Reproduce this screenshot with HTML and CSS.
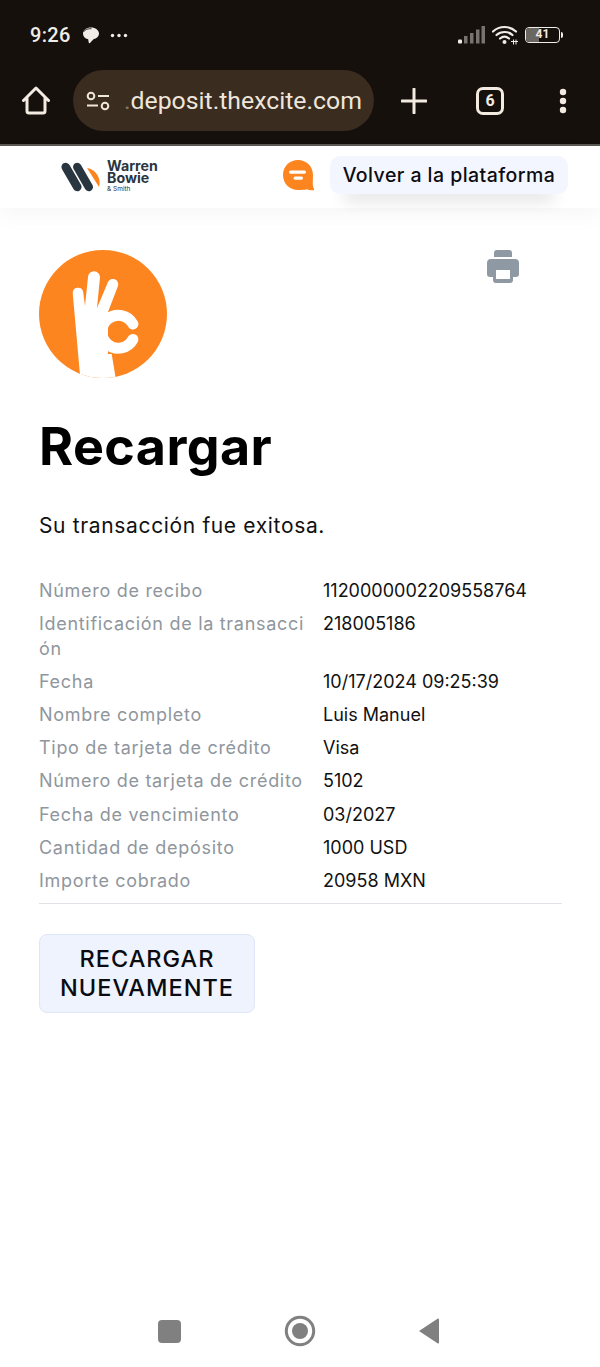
FILE: index.html
```html
<!DOCTYPE html>
<html lang="es">

<head>
  <meta charset="UTF-8">
  <meta name="viewport" content="width=device-width, initial-scale=1.0">
  <title>Recargar</title>
  <link rel="stylesheet" href="styles.css">
</head>

<body>
  <div class="phone">
    <!-- status bar + browser toolbar -->
    <div class="chrome">
      <div class="status-bar">
        <span class="clock">9:26</span>
        <svg class="ic-bubble" width="17" height="17" viewBox="0 0 17 17">
          <path d="M9 .5c4.500 0 8 2.700 8 6 0 2.800-2.300 5-5.500 5.700L8 16c-.6.500-1.200.3-1.300-.4l-.5-3.400C2.800 11.600 1 9.500 1 6.500 1 3.200 4.500 .5 9 .5z" fill="#f0ece6" />
          <path d="M1.500 5C3 2.500 6 1.500 9.500 1.700" stroke="#15100c" stroke-width=".8" fill="none" />
        </svg>
        <svg class="ic-dots" width="18" height="5" viewBox="0 0 18 5">
          <circle cx="2.500" cy="2.500" r="1.700" fill="#f0ece6" />
          <circle cx="9" cy="2.500" r="1.700" fill="#f0ece6" />
          <circle cx="15.500" cy="2.500" r="1.700" fill="#f0ece6" />
        </svg>
        <div class="status-right">
          <svg width="27" height="18" viewBox="0 0 27 18">
            <rect x="0" y="13.500" width="4" height="4" rx="1" fill="#f0ece6" />
            <rect x="6" y="10" width="3.500" height="7.500" fill="#77736e" />
            <rect x="12" y="7" width="3.500" height="10.500" fill="#77736e" />
            <rect x="18" y="3.500" width="3.500" height="14" fill="#77736e" />
            <rect x="23.500" y="0" width="3.500" height="17.500" fill="#77736e" />
          </svg>
          <svg class="ic-wifi" width="26" height="20" viewBox="0 0 26 20">
            <path d="M1 6.500C7.500 .5 17.500 .5 24 6.500M4.500 10C9 6 16 6 20.500 10M8 13.500C10.800 11.200 14.200 11.200 17 13.500" fill="none" stroke="#f0ece6" stroke-width="2.200" stroke-linecap="round" />
            <circle cx="12.500" cy="17" r="2" fill="#f0ece6" />
            <path d="M19 16.500h7M21.500 14.500v5M24 14.500v5" stroke="#f0ece6" stroke-width="1" fill="none" />
          </svg>
          <div class="battery">
            <div class="battery-body"><span class="battery-level"></span><span class="battery-num">41</span></div>
            <span class="battery-tip"></span>
          </div>
        </div>
      </div>
      <div class="toolbar">
        <svg class="ic-home" width="28" height="29" viewBox="0 0 28 29">
          <path d="M1.500 14.500L14 2l12.500 12.500M5 12v13a2 2 0 0 0 2 2h14a2 2 0 0 0 2-2V12" fill="none" stroke="#f3ebe2" stroke-width="3" stroke-linecap="round" stroke-linejoin="round" />
        </svg>
        <div class="url-pill">
          <svg width="24" height="20" viewBox="0 0 24 20">
            <circle cx="5" cy="5" r="3.300" fill="none" stroke="#efe6db" stroke-width="2" />
            <path d="M12 5h11M1 14.500h11" stroke="#efe6db" stroke-width="2.200" fill="none" />
            <circle cx="19" cy="15" r="3.300" fill="none" stroke="#efe6db" stroke-width="2" />
          </svg>
          <span class="url"><span class="url-fade">.</span>deposit.thexcite.com</span>
        </div>
        <svg class="ic-plus" width="26" height="26" viewBox="0 0 26 26">
          <path d="M13 1v24M1 13h24" stroke="#f3ebe2" stroke-width="3" fill="none" stroke-linecap="round" />
        </svg>
        <div class="tab-count">6</div>
        <svg class="ic-menu" width="8" height="26" viewBox="0 0 8 26">
          <circle cx="4" cy="4" r="3.200" fill="#f3ebe2" />
          <circle cx="4" cy="13" r="3.200" fill="#f3ebe2" />
          <circle cx="4" cy="22" r="3.200" fill="#f3ebe2" />
        </svg>
      </div>
    </div>

    <!-- site header -->
    <div class="site-header">
      <div class="brand">
        <svg width="43" height="31" viewBox="0 0 43 31">
          <path d="M27 7a15 15 0 0 1 12 19z" fill="#fd8520" />
          <path d="M5.700 6L17.300 26M17.300 6L28.800 26" stroke="#2a363f" stroke-width="8.500" stroke-linecap="round" fill="none" />
        </svg>
        <div class="brand-text">
          <div class="brand-name">Warren<br>Bowie</div>
          <div class="brand-sub">&amp; Smith</div>
        </div>
      </div>
      <svg class="ic-chat" width="31" height="31" viewBox="0 0 31 31">
        <path d="M15 0c8.500 0 15 6.500 15 15 0 4-.5 8 0 11 .300 2 1.500 3.500 1 4-1 .500-5 .300-7-.8C21.500 29.800 18 30 15 30 6.500 30 0 23.500 0 15S6.500 0 15 0z" fill="#fd8520" />
        <rect x="6" y="10.500" width="17" height="3.200" rx="1.600" fill="#fff" />
        <rect x="10.500" y="16.500" width="9.500" height="3.200" rx="1.600" fill="#fff" />
      </svg>
      <div class="back-btn">Volver a la plataforma</div>
    </div>

    <!-- receipt -->
    <div class="content">
      <div class="top-row">
        <svg class="ok-logo" width="128" height="128" viewBox="0 0 128 128">
          <defs>
            <clipPath id="logo-clip">
              <circle cx="64" cy="64" r="64" />
            </clipPath>
          </defs>
          <circle cx="64" cy="64" r="64" fill="#fd8520" />
          <g clip-path="url(#logo-clip)">
            <path d="M41 125L33.700 43a5.300 5.300 0 0 1 10.500-1L46 56 49 27a6 6 0 0 1 12 .5L58 58 69 32a5.400 5.400 0 0 1 10 4L69 62V104H72.700L77 130H41z" fill="#fff" />
            <path d="M93.900 74A16.500 16.500 0 1 0 93.900 89.400" fill="none" stroke="#fff" stroke-width="11" stroke-linecap="round" />
          </g>
        </svg>
        <svg class="ic-print" width="32" height="33" viewBox="0 0 32 33">
          <path d="M7 3a3 3 0 0 1 3-3h12a3 3 0 0 1 3 3v4H7z" fill="#8f99a3" />
          <path d="M4 9h24a4 4 0 0 1 4 4v11a3 3 0 0 1-3 3h-3v3a3 3 0 0 1-3 3H9a3 3 0 0 1-3-3v-3H3a3 3 0 0 1-3-3V13a4 4 0 0 1 4-4z" fill="#8f99a3" />
          <rect x="9" y="20" width="14" height="9" fill="#fff" />
        </svg>
      </div>

      <h1 class="title">Recargar</h1>
      <p class="message">Su transacción fue exitosa.</p>

      <div class="details">
        <div class="label">Número de recibo</div>
        <div class="value">1120000002209558764</div>
        <div class="label">Identificación de la transacci<br>ón</div>
        <div class="value">218005186</div>
        <div class="label">Fecha</div>
        <div class="value">10/17/2024 09:25:39</div>
        <div class="label">Nombre completo</div>
        <div class="value">Luis Manuel</div>
        <div class="label">Tipo de tarjeta de crédito</div>
        <div class="value">Visa</div>
        <div class="label">Número de tarjeta de crédito</div>
        <div class="value">5102</div>
        <div class="label">Fecha de vencimiento</div>
        <div class="value">03/2027</div>
        <div class="label">Cantidad de depósito</div>
        <div class="value">1000 USD</div>
        <div class="label">Importe cobrado</div>
        <div class="value">20958 MXN</div>
      </div>

      <div class="again-btn">RECARGAR NUEVAMENTE</div>
    </div>

    <!-- android nav -->
    <div class="nav-bar">
      <span class="nav-square"></span>
      <svg width="32" height="32" viewBox="0 0 32 32">
        <circle cx="16" cy="16" r="13.700" fill="none" stroke="#808080" stroke-width="3" />
        <circle cx="16" cy="16" r="8" fill="#808080" />
      </svg>
      <svg width="22" height="26" viewBox="0 0 22 26">
        <path d="M21 1.500V24.500a1 1 0 0 1-1.500.8L1 13 19.500 .7a1 1 0 0 1 1.500.8z" fill="#808080" />
      </svg>
    </div>
  </div>
</body>

</html>
```

FILE: styles.css
```css
* {
  box-sizing: border-box;
}

body {
  margin: 0;
  background: #fff;
  font-family: "Inter", "Noto Sans", sans-serif;
}

.phone {
  width: 600px;
  height: 1367px;
  display: flex;
  flex-direction: column;
  overflow: hidden;
}

/* browser chrome */
.chrome {
  height: 146px;
  background: #15100c;
  border-bottom: 2px solid #5c5854;
  flex-shrink: 0;
}

.status-bar {
  height: 70px;
  display: flex;
  align-items: center;
  padding: 0 37px 0 30px;
  color: #f0ece6;
}

.clock {
  font-family: "Roboto", sans-serif;
  font-size: 20px;
  font-weight: 500;
  letter-spacing: .3px;
  width: 52px;
}

.ic-bubble {
  margin-right: 11px;
}

.status-right {
  margin-left: auto;
  display: flex;
  align-items: center;
  gap: 7px;
}

.battery {
  display: flex;
  align-items: center;
  gap: 1px;
}

.battery-body {
  position: relative;
  width: 35px;
  height: 16px;
  border: 1.500px solid #f0ece6;
  border-radius: 4px;
  overflow: hidden;
}

.battery-level {
  display: block;
  width: 40%;
  height: 100%;
  background: #6a6763;
}

.battery-num {
  position: absolute;
  inset: 0;
  text-align: center;
  font-family: "Roboto", sans-serif;
  font-size: 12px;
  font-weight: 700;
  line-height: 13px;
}

.battery-tip {
  width: 2px;
  height: 6px;
  background: #f0ece6;
  border-radius: 0 2px 2px 0;
}

.toolbar {
  height: 61px;
  display: flex;
  align-items: center;
  padding-left: 22px;
}

.ic-home {
  margin-right: 23px;
}

.url-pill {
  width: 301px;
  height: 61px;
  border-radius: 31px;
  background: #3a2c1f;
  display: flex;
  align-items: center;
  padding-left: 13px;
  margin-right: 27px;
}

.url {
  margin-left: 14px;
  font-family: "Roboto", sans-serif;
  font-size: 24.800px;
  color: #efe6db;
  white-space: nowrap;
}

.url-fade {
  opacity: .4;
}

.tab-count {
  width: 28px;
  height: 28px;
  margin-left: 49px;
  margin-right: 55px;
  border: 3px solid #f3ebe2;
  border-radius: 7px;
  color: #f3ebe2;
  font-family: "Roboto", sans-serif;
  font-size: 16px;
  font-weight: 700;
  line-height: 22px;
  text-align: center;
}

/* site header */
.site-header {
  height: 62px;
  flex-shrink: 0;
  display: flex;
  align-items: center;
  padding: 0 32px 4px 60px;
  background: #fff;
  box-shadow: 0 8px 24px rgba(0, 0, 0, .035);
  position: relative;
}

.brand {
  display: flex;
  align-items: flex-start;
  gap: 4px;
  margin-top: 4px;
}

.brand-text {
  color: #2a363f;
  font-weight: 700;
  margin-top: -1px;
}

.brand-name {
  font-size: 14.200px;
  line-height: 12px;
}

.brand-sub {
  margin-top: 1px;
  font-size: 6.500px;
  font-weight: 400;
  line-height: 8px;
}

.ic-chat {
  margin-left: auto;
  margin-right: 16px;
}

.back-btn {
  width: 238px;
  height: 38px;
  border-radius: 10px;
  background: #f3f6fe;
  color: #0b0b12;
  font-size: 19.500px;
  font-weight: 500;
  line-height: 38px;
  letter-spacing: .45px;
  text-align: center;
  white-space: nowrap;
  box-shadow: 0 20px 16px -14px rgba(0, 0, 0, .15);
}

/* receipt */
.content {
  padding: 42px 38px 0 39px;
}

.top-row {
  display: flex;
  justify-content: space-between;
  align-items: flex-start;
  padding-right: 43px;
}

.title {
  margin: 34px 0 0;
  color: #000;
  font-size: 52px;
  font-weight: 700;
  line-height: 70px;
  letter-spacing: .4px;
}

.message {
  margin: 29px 0 0;
  color: #111;
  font-size: 21px;
  line-height: 30px;
  letter-spacing: .65px;
}

.details {
  margin-top: 37px;
  padding-bottom: 10px;
  border-bottom: 1px solid #dfe2e6;
  display: grid;
  grid-template-columns: 284px 1fr;
  row-gap: 8.100px;
  font-size: 18px;
  line-height: 25px;
}

.label {
  color: #8f969d;
  white-space: nowrap;
  letter-spacing: .7px;
}

.value {
  color: #111;
}

.again-btn {
  width: 216px;
  height: 79px;
  margin-top: 30px;
  padding: 9px 12px;
  border: 1px solid #dfe6f5;
  border-radius: 8px;
  background: #eff3fd;
  color: #0b0b12;
  font-size: 23.500px;
  font-weight: 500;
  line-height: 29px;
  letter-spacing: 1px;
  text-align: center;
}

/* android nav */
.nav-bar {
  margin-top: auto;
  height: 72px;
  display: flex;
  align-items: center;
  justify-content: center;
  gap: 102.500px;
  padding-right: 2px;
}

.nav-square {
  width: 23px;
  height: 23px;
  border-radius: 4px;
  background: #808080;
}
```
